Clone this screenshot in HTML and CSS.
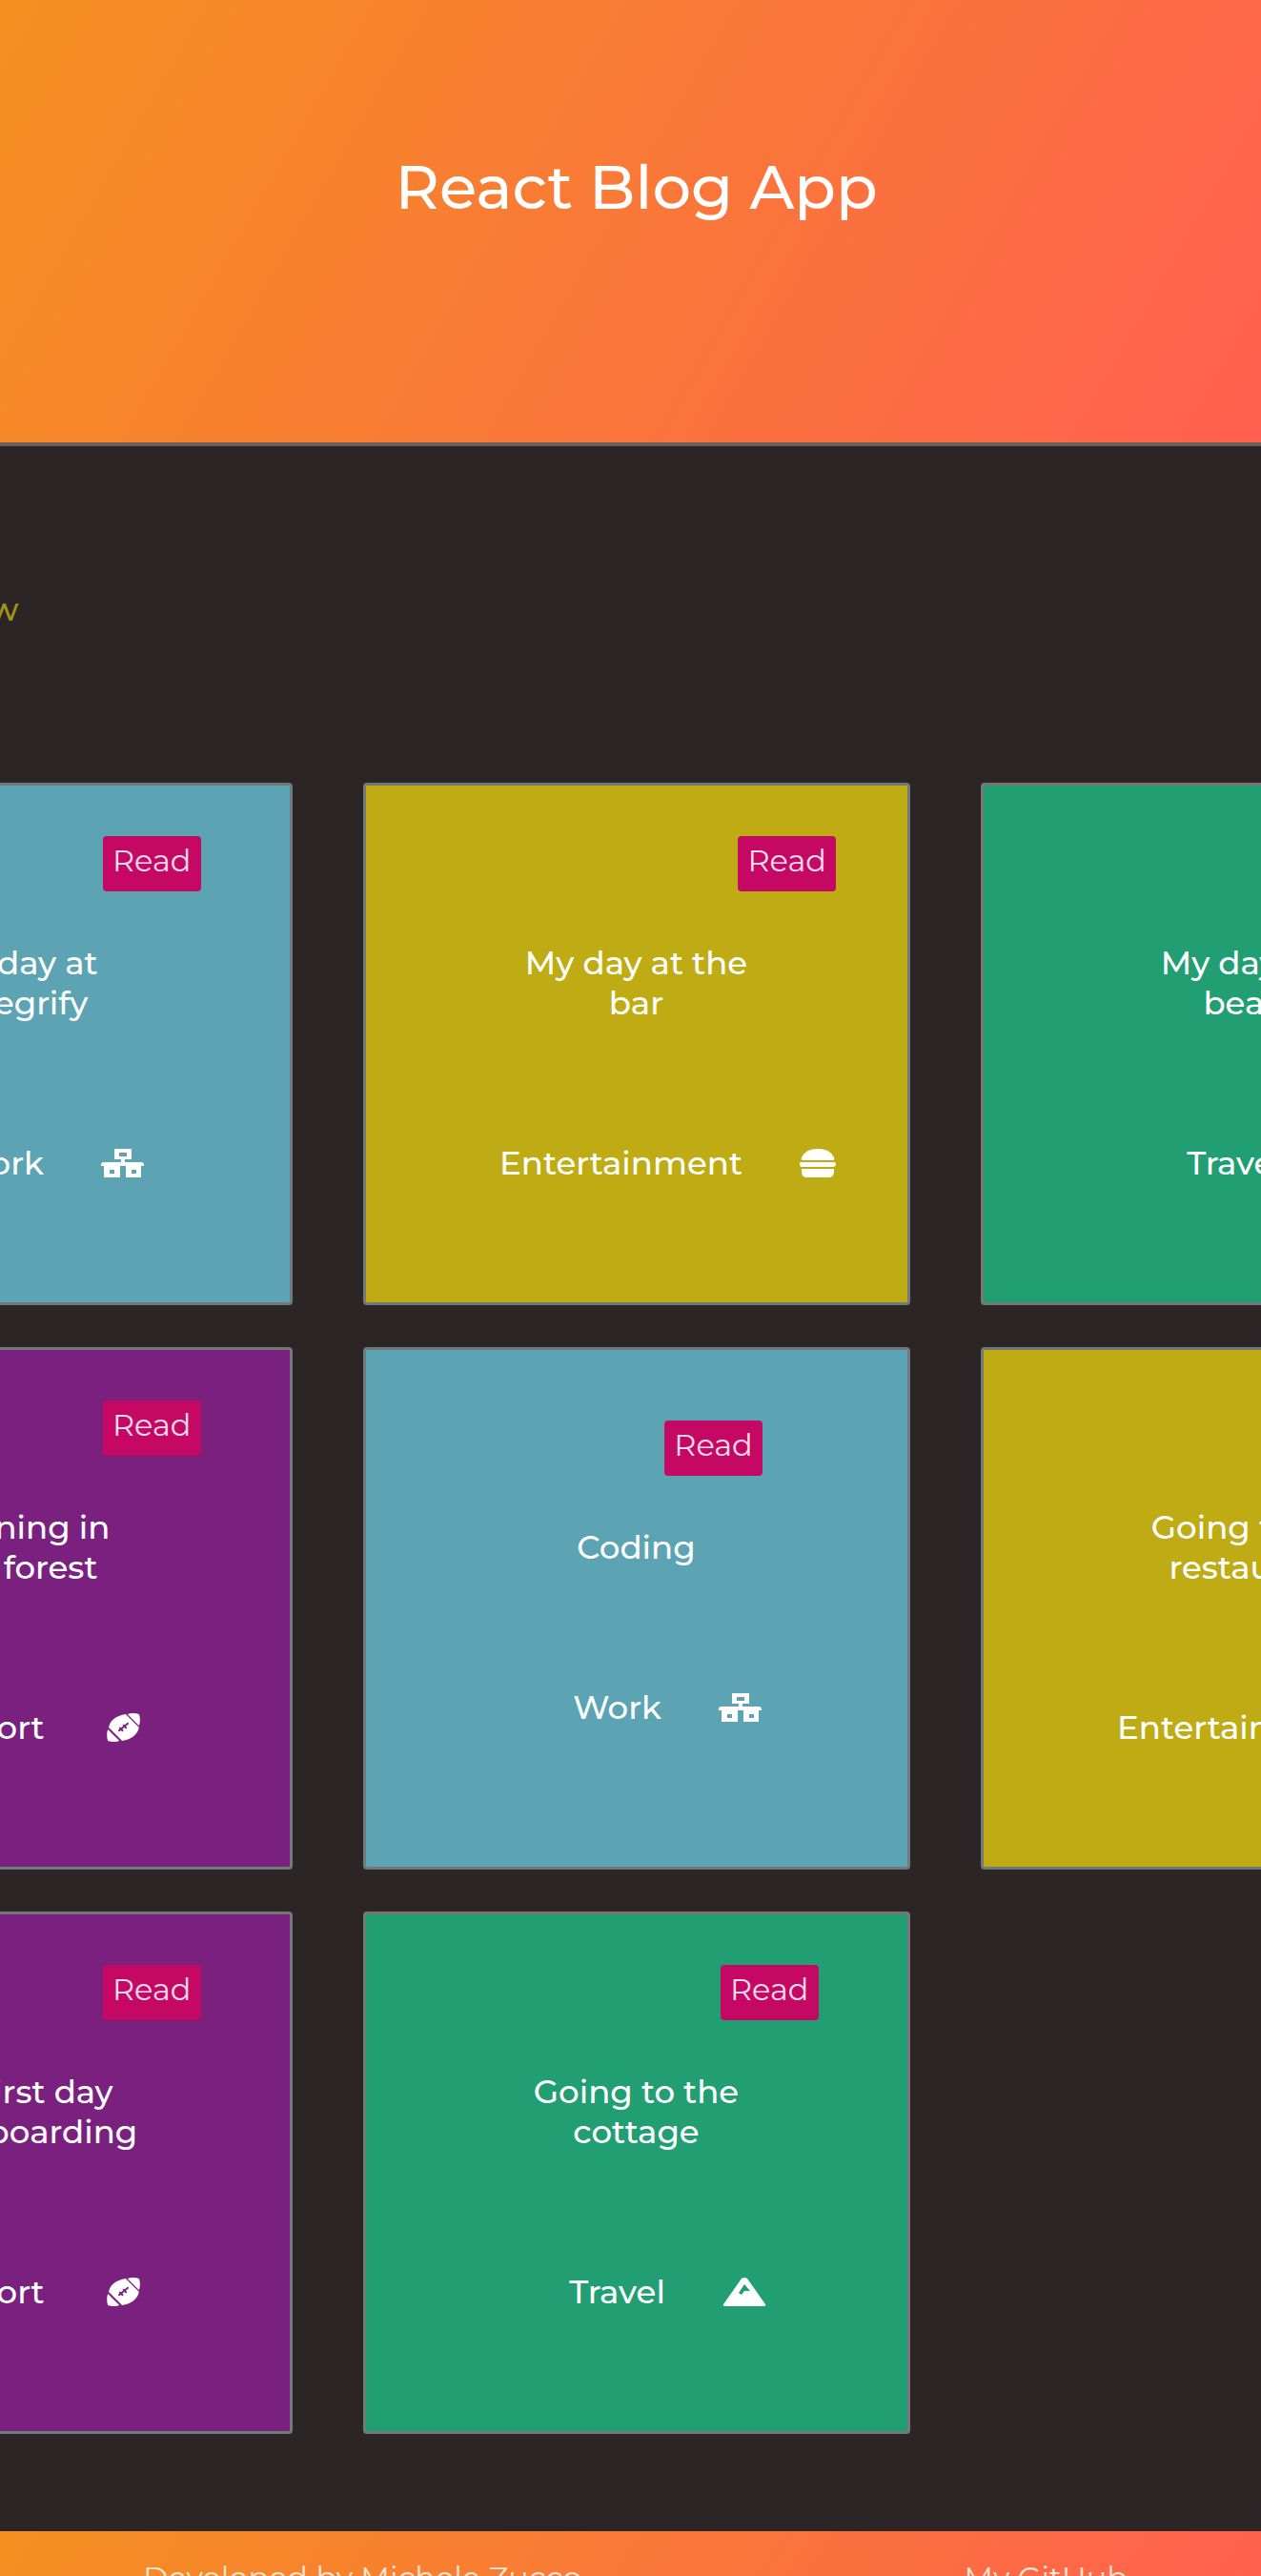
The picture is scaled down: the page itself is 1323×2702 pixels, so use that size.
FILE: index.html
```html
<!DOCTYPE html>
<html lang="en">
<head>
<meta charset="utf-8">
<meta name="viewport" content="width=device-width, initial-scale=1">
<title>React Blog App</title>
<link rel="stylesheet" href="styles.css">
</head>
<body>
<svg class="sprite" aria-hidden="true">
  <symbol id="icon-work" viewBox="0 0 46 30">
    <path fill="currentColor" fill-rule="evenodd" d="M15 0h16q1 0 1 1v10h-7v3h17q3 0 3 3v1h-3v12H26V18h-6v12H3V18H0v-1q0-3 3-3h18v-3h-7V1q0-1 1-1zM19 4v4h8V4zM9 22v4h5v-4zM32 22v4h5v-4z"/>
  </symbol>
  <symbol id="icon-burger" viewBox="0 0 38 30">
    <path fill="currentColor" d="M3 12Q1 12 2 9Q6 0 19 0T36 9Q37 12 35 12zM2 14h34q2 0 2 2t-2 3H2q-2 0-2-3t2-2zM2 21h34v3q0 6-6 6H8q-6 0-6-6z"/>
  </symbol>
  <symbol id="icon-ball" viewBox="0 0 46 32">
    <path fill="currentColor" d="M40 1Q42 8 40 14L27 1Q33-1 40 1zM5 31Q3 24 5 18L18 31Q12 33 5 31zM6 16Q8 4 25 1L40 16Q37 28 21 31z"/>
    <path stroke="#7a217f" stroke-width="2" d="M17 20l11-9M18 16l4 4M22 13l4 4"/>
  </symbol>
  <symbol id="icon-mountain" viewBox="0 0 46 30">
    <path fill="currentColor" fill-rule="evenodd" d="M20 1q3-2 6 0l19 27q1 2-2 2H3q-3 0-2-2zM23 7l-6 9 3 2 3-4h6z"/>
  </symbol>
</svg>

<header class="hero">
  <h1 class="hero-title">React Blog App</h1>
</header>

<main class="content">
  <nav class="track toolbar">
    <a class="add-link" href="#new">Add new</a>
  </nav>
  <section class="track posts">
    <article class="card work">
      <div class="card-body">
        <button class="read" type="button">Read</button>
        <h2 class="card-title">My day at Integrify</h2>
        <p class="category">Work <svg class="icon"><use href="#icon-work"/></svg></p>
      </div>
    </article>
    <article class="card fun">
      <div class="card-body">
        <button class="read" type="button">Read</button>
        <h2 class="card-title">My day at the bar</h2>
        <p class="category">Entertainment <svg class="icon icon-narrow"><use href="#icon-burger"/></svg></p>
      </div>
    </article>
    <article class="card travel">
      <div class="card-body">
        <button class="read" type="button">Read</button>
        <h2 class="card-title">My day at a beach</h2>
        <p class="category">Travel <svg class="icon"><use href="#icon-mountain"/></svg></p>
      </div>
    </article>
    <article class="card sport">
      <div class="card-body">
        <button class="read" type="button">Read</button>
        <h2 class="card-title">Running in<br>the forest</h2>
        <p class="category">Sport <svg class="icon"><use href="#icon-ball"/></svg></p>
      </div>
    </article>
    <article class="card work">
      <div class="card-body">
        <button class="read" type="button">Read</button>
        <h2 class="card-title">Coding</h2>
        <p class="category">Work <svg class="icon"><use href="#icon-work"/></svg></p>
      </div>
    </article>
    <article class="card fun">
      <div class="card-body">
        <button class="read" type="button">Read</button>
        <h2 class="card-title">Going to the restaurant</h2>
        <p class="category">Entertainment <svg class="icon icon-narrow"><use href="#icon-burger"/></svg></p>
      </div>
    </article>
    <article class="card sport">
      <div class="card-body">
        <button class="read" type="button">Read</button>
        <h2 class="card-title">My first day snowboarding</h2>
        <p class="category">Sport <svg class="icon"><use href="#icon-ball"/></svg></p>
      </div>
    </article>
    <article class="card travel">
      <div class="card-body">
        <button class="read" type="button">Read</button>
        <h2 class="card-title">Going to the cottage</h2>
        <p class="category">Travel <svg class="icon"><use href="#icon-mountain"/></svg></p>
      </div>
    </article>
  </section>
</main>

<footer class="footer">
  <span>Developed by Michele Zucco</span>
  <a class="footer-link" href="#github">My GitHub</a>
</footer>
</body>
</html>
```

FILE: styles.css
```css
* {
  box-sizing: border-box;
}

body {
  margin: 0;
  height: 100vh;
  overflow: hidden;
  background: #2b2525;
  color: #fff;
  font-family: Montserrat, Inter, "Liberation Sans", sans-serif;
  font-size: 34px;
  line-height: 42px;
}

.sprite {
  display: none;
}

.hero {
  padding: 154px 0 226px 12px;
  border-bottom: 4px solid #6d605a;
  background: linear-gradient(120deg, #f49020, #ff604f);
  text-align: center;
}

.hero-title {
  margin: 0;
  font-size: 64px;
  font-weight: 500;
  line-height: 84px;
}

.content {
  padding: 150px 0 102px 12px;
}

.track {
  display: grid;
  grid-template-columns: repeat(3, 574px);
  gap: 44px 74px;
  justify-content: center;
}

.toolbar {
  margin-bottom: 161px;
}

.add-link {
  padding-right: 50%;
  color: #a09318;
  font-weight: 500;
  text-align: right;
  text-decoration: none;
}

.card {
  display: flex;
  flex-direction: column;
  align-items: center;
  justify-content: center;
  min-height: 548px;
  border: 3px solid #73787a;
  border-radius: 4px;
}

.work { background: #5ca3b3; }
.fun { background: #bfac14; }
.travel { background: #229e73; }
.sport { background: #7a217f; }

.card-body {
  display: flex;
  flex-direction: column;
  align-items: center;
  min-width: 258px;
  padding-bottom: 72px;
}

.sport .card-body {
  min-width: 382px;
}

.read {
  align-self: flex-end;
  height: 58px;
  padding: 0 10px 6px;
  border: 0;
  border-radius: 4px;
  background: #c50863;
  color: #f9dcea;
  font: inherit;
  font-size: 32px;
}

.card-title {
  max-width: 382px;
  margin: 54px 0 126px;
  padding: 0 66px;
  font-size: 34px;
  font-weight: 500;
  text-align: center;
}

.category {
  display: flex;
  align-items: center;
  gap: 60px;
  margin: 0;
  padding-left: 66px;
  font-weight: 500;
}

.icon {
  width: 46px;
  height: 30px;
}

.icon-narrow {
  width: 38px;
}

.footer {
  display: flex;
  justify-content: space-between;
  padding: 28px 140px 28px 150px;
  background: linear-gradient(120deg, #f49020, #ff604f);
  color: #ffe3d3;
  font-size: 32px;
}

.footer-link {
  color: inherit;
  text-decoration: none;
}
```
